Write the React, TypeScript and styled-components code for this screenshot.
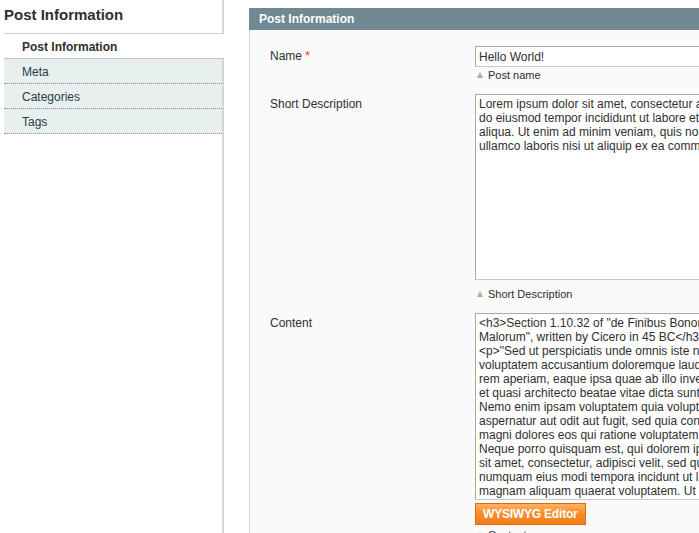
import React from 'react'
import styled, { createGlobalStyle } from 'styled-components'

const GlobalStyle = createGlobalStyle`
  html, body {
    margin: 0;
    padding: 0;
    height: 100%;
    overflow: hidden;
    background: #fff;
  }
  body {
    font: 12px/14px 'Liberation Sans', Arial, sans-serif;
    color: #2f2f2f;
  }
  #root {
    height: 100%;
  }
`

const shortText =
  'Lorem ipsum dolor sit amet, consectetur adipiscing elit, sed do eiusmod tempor incididunt ut labore et dolore magna aliqua. Ut enim ad minim veniam, quis nostrud exercitation ullamco laboris nisi ut aliquip ex ea commodo consequat.'

const contentText =
  '<h3>Section 1.10.32 of "de Finibus Bonorum et Malorum", written by Cicero in 45 BC</h3>\n' +
  '<p>"Sed ut perspiciatis unde omnis iste natus error sit voluptatem accusantium doloremque laudantium, totam rem aperiam, eaque ipsa quae ab illo inventore veritatis et quasi architecto beatae vitae dicta sunt explicabo. Nemo enim ipsam voluptatem quia voluptas sit aspernatur aut odit aut fugit, sed quia consequuntur magni dolores eos qui ratione voluptatem sequi nesciunt. Neque porro quisquam est, qui dolorem ipsum quia dolor sit amet, consectetur, adipisci velit, sed quia non numquam eius modi tempora incidunt ut labore et dolore magnam aliquam quaerat voluptatem. Ut enim ad minima veniam, quis nostrum exercitationem ullam corporis suscipit laboriosam, nisi ut aliquid ex ea commodi consequatur? Quis autem vel eum iure reprehenderit qui in ea voluptate velit esse quam nihil molestiae consequatur, vel illum qui dolorem eum fugiat quo voluptas nulla pariatur?"</p>'

const tabs = ['Post Information', 'Meta', 'Categories', 'Tags']

export default function App() {
  return (
    <>
      <GlobalStyle />
      <Page>
        <SideCol>
          <SideTitle>Post Information</SideTitle>
          <TabList>
            {tabs.map((tab, i) => (
              <TabItem key={tab} $active={i === 0}>
                {tab}
              </TabItem>
            ))}
          </TabList>
        </SideCol>

        <MainCol>
          <SectionHeader>Post Information</SectionHeader>
          <SectionBody>
            <FormRow>
              <Label>
                Name <Required>*</Required>
              </Label>
              <Field>
                <TextInput defaultValue='Hello World!' />
                <Note $gap={1}>
                  <Triangle />
                  Post name
                </Note>
              </Field>
            </FormRow>

            <FormRow>
              <Label>Short Description</Label>
              <Field>
                <TextArea $inner={320} $height={186} defaultValue={shortText} />
                <Note $gap={7}>
                  <Triangle />
                  Short Description
                </Note>
              </Field>
            </FormRow>

            <FormRow>
              <Label>Content</Label>
              <Field>
                <TextArea $inner={305} $height={187} defaultValue={contentText} />
                <EditorButton type='button'>WYSIWYG Editor</EditorButton>
                <Note $gap={3}>
                  <Triangle />
                  Content
                </Note>
              </Field>
            </FormRow>
          </SectionBody>
        </MainCol>
      </Page>
    </>
  )
}

// layout
const Page = styled.div`
  display: flex;
  height: 100%;
`

const SideCol = styled.aside`
  flex: none;
  width: 224px;
  box-sizing: border-box;
  padding-left: 4px;
  border-right: 2px solid #d6d6d6;
`

const SideTitle = styled.h3`
  margin: 0;
  padding: 6px 0 10px;
  font-size: 15px;
  line-height: 17px;
  font-weight: bold;
  color: #2f2f2f;
  border-bottom: 1px solid #cfcfcf;
`

const TabList = styled.ul`
  list-style: none;
  margin: 0;
  padding: 0;
`

const TabItem = styled.li<{ $active?: boolean }>`
  height: 22px;
  padding: 2px 0 0 18px;
  line-height: 22px;
  font-size: 12px;
  ${({ $active }) =>
    $active
      ? `
    margin-right: -2px;
    background: #fff;
    font-weight: bold;
    color: #2f2f2f;
    border-bottom: 1px solid #c4c4c4;
  `
      : `
    background: #e7efef;
    color: #2b3b44;
    border-bottom: 1px dotted #8a8a8a;
  `}
`

const MainCol = styled.main`
  flex: 1;
  min-width: 0;
  margin-left: 25px;
  padding-top: 8px;
  display: flex;
  flex-direction: column;
  overflow: hidden;
`

const SectionHeader = styled.div`
  height: 22px;
  line-height: 22px;
  padding-left: 10px;
  background: #6f8992;
  color: #fff;
  font-weight: bold;
  font-size: 12px;
  white-space: nowrap;
`

const SectionBody = styled.div`
  flex: 1;
  background: #fafafa;
  border-left: 1px solid #d6d6d6;
  padding: 16px 0 0 20px;
`

const FormRow = styled.div`
  display: grid;
  grid-template-columns: 205px auto;
  padding-bottom: 12px;
`

const Label = styled.label`
  padding-top: 3px;
  line-height: 14px;
  color: #2f2f2f;
`

const Required = styled.span`
  color: #eb340a;
`

const Field = styled.div`
  display: flex;
  flex-direction: column;
  align-items: flex-start;
`

const TextInput = styled.input`
  box-sizing: border-box;
  width: 328px;
  height: 21px;
  margin: 0;
  padding: 0 3px;
  border: 1px solid;
  border-color: #aaa #c8c8c8 #c8c8c8 #aaa;
  background: #fff;
  font: 12px 'Liberation Sans', Arial, sans-serif;
  color: #2f2f2f;
  outline: none;
`

const TextArea = styled.textarea<{ $inner: number; $height: number }>`
  display: block;
  box-sizing: content-box;
  width: ${({ $inner }) => $inner}px;
  height: ${({ $height }) => $height - 5}px;
  margin: 0;
  padding: 2px 3px 1px;
  border: 1px solid;
  border-color: #aaa #c8c8c8 #c8c8c8 #aaa;
  background: #fff;
  font: 12px/14px 'Liberation Sans', Arial, sans-serif;
  color: #2f2f2f;
  resize: none;
  overflow: hidden;
  outline: none;
`

const Note = styled.p<{ $gap: number }>`
  display: flex;
  align-items: center;
  margin: ${({ $gap }) => $gap}px 0 0;
  height: 14px;
  font-size: 11px;
  line-height: 14px;
  color: #2f2f2f;
`

const Triangle = styled.span`
  width: 0;
  height: 0;
  margin: 0 5px 0 2px;
  border-left: 3.5px solid transparent;
  border-right: 3.5px solid transparent;
  border-bottom: 6px solid #ababab;
`

const EditorButton = styled.button`
  margin-top: 3px;
  height: 22px;
  padding: 0 7px;
  border: 1px solid #e06b0e;
  background: linear-gradient(#fdb260 0%, #f6902f 45%, #f07d14 100%);
  color: #fff;
  font: bold 12px 'Liberation Sans', Arial, sans-serif;
  letter-spacing: -0.2px;
  cursor: pointer;
`
